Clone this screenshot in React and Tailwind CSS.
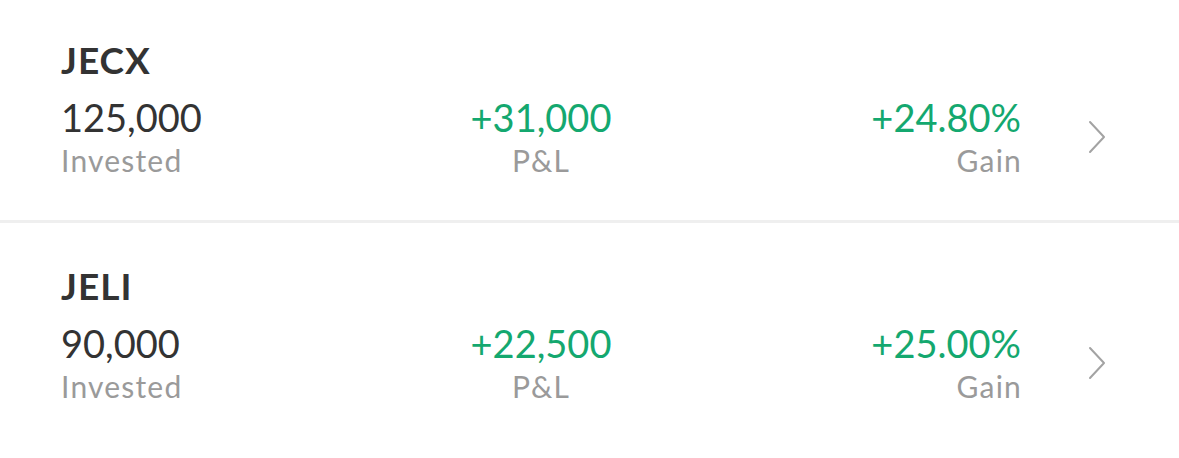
import React from "react";

const holdings = [
  { name: "JECX", invested: "125,000", pnl: "+31,000", gain: "+24.80%" },
  { name: "JELI", invested: "90,000", pnl: "+22,500", gain: "+25.00%" },
];

function Chevron() {
  return (
    <svg width="18" height="34" viewBox="0 0 18 34" fill="none" className="shrink-0">
      <path d="M2 2 L16 17 L2 32" stroke="#a3a3a3" strokeWidth="2" strokeLinecap="round" strokeLinejoin="round" />
    </svg>
  );
}

function HoldingRow({ h, top }) {
  return (
    <div className={`pl-[61px] pb-[45px] ${top}`}>
      <div className="text-[37px] leading-[36px] font-bold tracking-[1px] text-[#333333]">{h.name}</div>
      <div className="flex items-center mt-[20px]">
        <div className="w-[320px]">
          <div className="text-[38px] leading-[38px] text-[#333333]">{h.invested}</div>
          <div className="text-[30px] leading-[30px] mt-[9px] tracking-[1.2px] text-[#9a9a9a]">Invested</div>
        </div>
        <div className="w-[320px] text-center">
          <div className="text-[38px] leading-[38px] text-[#14a86f]">{h.pnl}</div>
          <div className="text-[30px] leading-[30px] mt-[9px] tracking-[1.2px] text-[#9a9a9a]">P&amp;L</div>
        </div>
        <div className="w-[320px] text-right">
          <div className="text-[38px] leading-[38px] text-[#14a86f]">{h.gain}</div>
          <div className="text-[30px] leading-[30px] mt-[9px] mr-[-1px] tracking-[1.2px] text-[#9a9a9a]">Gain</div>
        </div>
        <div className="ml-[67px]">
          <Chevron />
        </div>
      </div>
    </div>
  );
}

export default function App() {
  return (
    <div className="w-[1179px] h-[458px] bg-white overflow-hidden" style={{ fontFamily: "Lato, sans-serif" }}>
      <HoldingRow h={holdings[0]} top="pt-[42px]" />
      <div className="h-[3px] bg-[#efefef]" />
      <HoldingRow h={holdings[1]} top="pt-[45px]" />
    </div>
  );
}
